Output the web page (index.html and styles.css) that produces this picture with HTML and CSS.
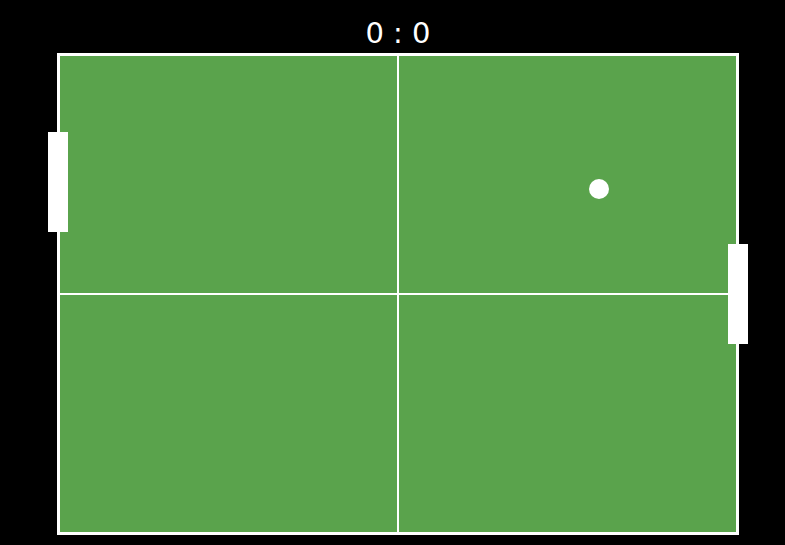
FILE: index.html
```html
<!DOCTYPE html>
<html>
<head>
<meta charset="utf-8">
<link rel="stylesheet" href="styles.css">
</head>
<body>
<div class="game">
  <div class="score">0 : 0</div>
  <div class="table">
    <div class="cell"></div>
    <div class="cell"></div>
    <div class="cell"></div>
    <div class="cell"></div>
    <div class="paddle paddle-left"></div>
    <div class="paddle paddle-right"></div>
    <div class="ball"></div>
  </div>
</div>
</body>
</html>
```
FILE: styles.css
```css
html, body {
  margin: 0;
  padding: 0;
  background: #000;
}
body {
  width: 785px;
  height: 545px;
  overflow: hidden;
}
.game {
  display: flex;
  flex-direction: column;
  padding-left: 57px;
}
.score {
  box-sizing: border-box;
  width: 682px;
  height: 53px;
  padding-top: 16px;
  font-family: "DejaVu Sans", sans-serif;
  font-size: 29px;
  line-height: 34px;
  color: #fff;
  text-align: center;
}
.table {
  position: relative;
  width: 676px;
  height: 476px;
  border: 3px solid #fff;
  background: #fff;
  display: grid;
  grid-template-columns: 337px 337px;
  grid-template-rows: 237px 237px;
  gap: 2px;
}
.cell {
  background: #5aa34c;
}
.paddle {
  position: absolute;
  width: 20px;
  height: 100px;
  background: #fff;
}
.paddle-left {
  left: -12px;
  top: 76px;
}
.paddle-right {
  left: 668px;
  top: 188px;
}
.ball {
  position: absolute;
  left: 529px;
  top: 123px;
  width: 20px;
  height: 20px;
  border-radius: 50%;
  background: #fff;
}
```
